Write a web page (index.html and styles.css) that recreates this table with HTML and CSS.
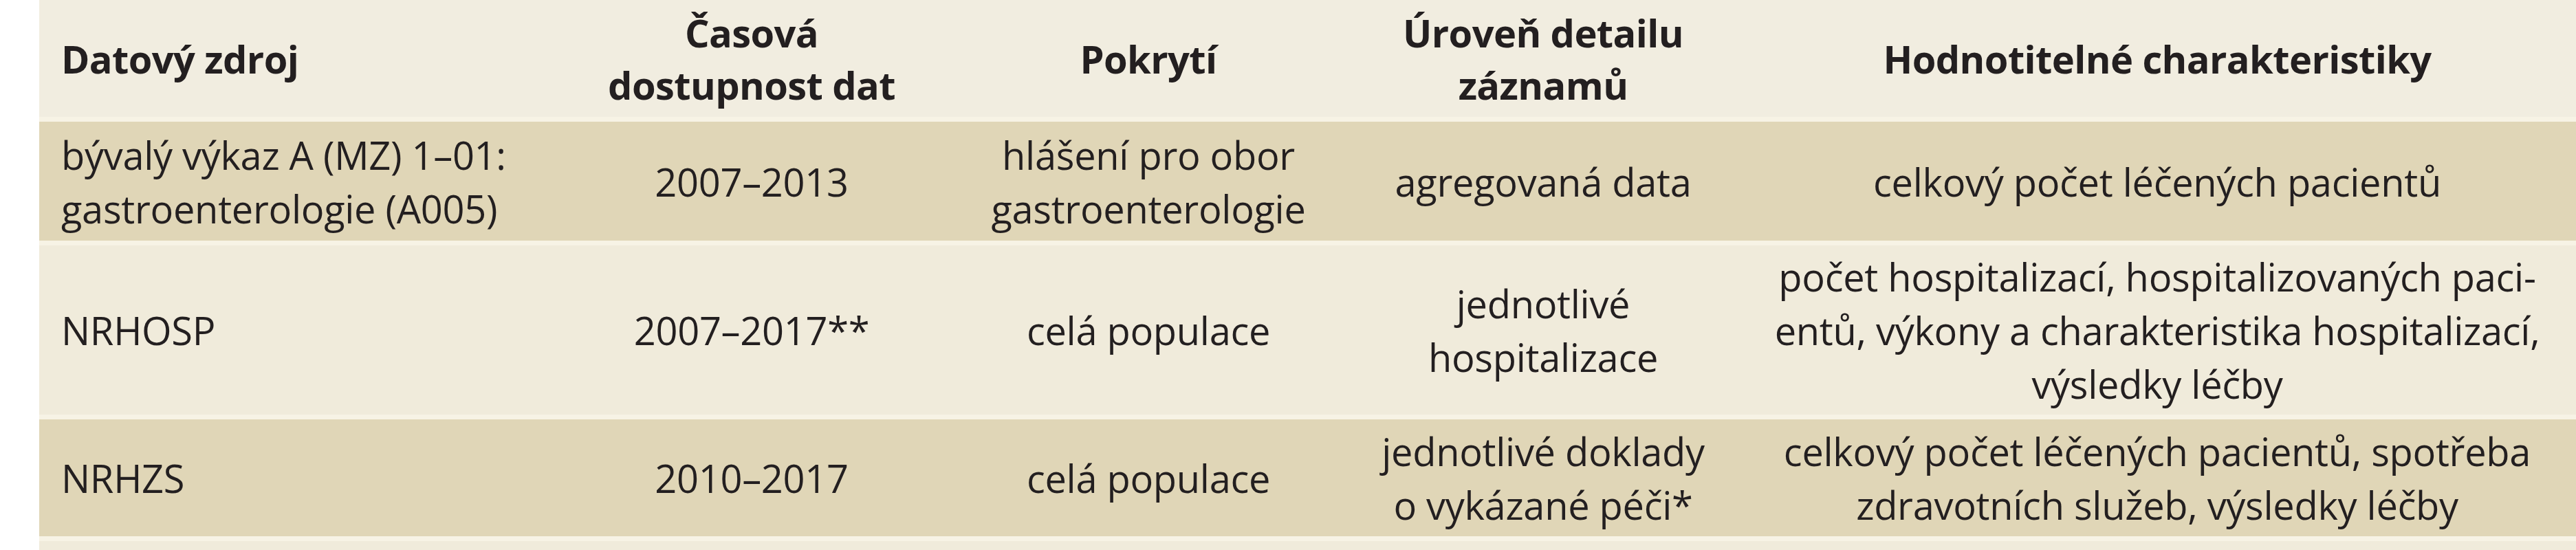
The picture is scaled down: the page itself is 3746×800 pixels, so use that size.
FILE: index.html
```html
<!DOCTYPE html>
<html lang="cs">
<head>
<meta charset="utf-8">
<title>Datové zdroje</title>
<link rel="stylesheet" href="styles.css">
</head>
<body>
<div class="page">
  <table class="data">
    <colgroup>
      <col class="w1"><col class="w2"><col class="w3"><col class="w4"><col class="w5">
    </colgroup>
    <thead>
      <tr class="head">
        <th class="left">Datový zdroj</th>
        <th>Časová<br>dostupnost dat</th>
        <th>Pokrytí</th>
        <th>Úroveň detailu<br>záznamů</th>
        <th>Hodnotitelné charakteristiky</th>
      </tr>
    </thead>
    <tbody>
      <tr class="dark r1">
        <td class="left">bývalý výkaz A (MZ) 1–01:<br>gastroenterologie (A005)</td>
        <td>2007–2013</td>
        <td>hlášení pro obor<br>gastroenterologie</td>
        <td>agregovaná data</td>
        <td>celkový počet léčených pacientů</td>
      </tr>
      <tr class="light r2">
        <td class="left">NRHOSP</td>
        <td>2007–2017**</td>
        <td>celá populace</td>
        <td>jednotlivé<br>hospitalizace</td>
        <td>počet hospitalizací, hospitalizovaných paci-<br>entů, výkony a charakteristika hospitalizací,<br>výsledky léčby</td>
      </tr>
      <tr class="dark r3">
        <td class="left">NRHZS</td>
        <td>2010–2017</td>
        <td>celá populace</td>
        <td>jednotlivé doklady<br>o vykázané péči*</td>
        <td>celkový počet léčených pacientů, spotřeba<br>zdravotních služeb, výsledky léčby</td>
      </tr>
      <tr class="light r4">
        <td class="left"></td><td></td><td></td><td></td><td></td>
      </tr>
    </tbody>
  </table>
</div>
</body>
</html>
```

FILE: styles.css
```css
html, body {
  margin: 0;
  padding: 0;
  background: #ffffff;
}

.page {
  padding-left: 57px;
  height: 800px;
  overflow: hidden;
}

.data {
  width: 3689px;
  table-layout: fixed;
  border-collapse: collapse;
  border-spacing: 0;
  font-family: "Open Sans", "Noto Sans", "Liberation Sans", sans-serif;
  color: #231f20;
  font-size: 56px;
  letter-spacing: -0.3px;
  line-height: 78px;
}

.w1 { width: 749px; }
.w2 { width: 574px; }
.w3 { width: 580px; }
.w4 { width: 568px; }
.w5 { width: 1218px; }

.data th,
.data td {
  padding: 0 12px;
  text-align: center;
  vertical-align: middle;
  white-space: nowrap;
}

.data .left {
  text-align: left;
  padding-left: 32px;
}

.data th {
  font-weight: 700;
  line-height: 76px;
  letter-spacing: -0.6px;
}

.head { height: 170px; background: #f1ede0; }
.r1 { height: 180px; }
.r2 { height: 253px; }
.r3 { height: 177px; }
.r4 { height: 60px; }

.dark { background: #e0d6b7; }
.light { background: #f0ebdb; }

.data tbody td {
  box-shadow: inset 0 7px 0 #f7f3e5;
  padding-top: 7px;
}
```
